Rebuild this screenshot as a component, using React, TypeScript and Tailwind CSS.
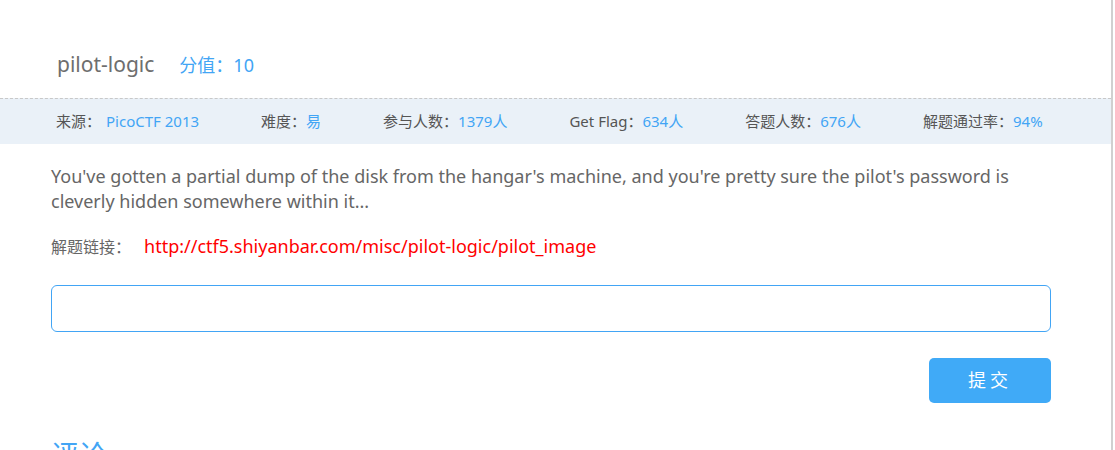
const font = "font-['Noto_Sans','Noto_Sans_CJK_SC',sans-serif]";

const stats: { label: string; value: string }[] = [
  { label: '来源：', value: 'PicoCTF 2013' },
  { label: '难度：', value: '易' },
  { label: '参与人数：', value: '1379人' },
  { label: 'Get Flag：', value: '634人' },
  { label: '答题人数：', value: '676人' },
  { label: '解题通过率：', value: '94%' },
];

export default function App() {
  return (
    <div className={`${font} w-[1115px] h-[450px] overflow-hidden bg-white flex`}>
      <div className="w-[1113px] shrink-0 border-r-2 border-[#d0d0d0]">
        {/* header */}
        <div className="h-[98px] pt-[54px] pl-[57px]">
          <div className="flex items-baseline">
            <span className="text-[21px] text-[#6e6e6e] leading-none">pilot-logic</span>
            <span className="ml-[25px] text-[18px] text-[#42a5f5] leading-none">分值：10</span>
          </div>
        </div>

        {/* stats bar */}
        <div className="h-[46px] border-t border-dashed border-[#c8c8c8] bg-[#eaf1f8] flex items-center gap-[62px] pl-[56px] text-[15px]">
          {stats.map((s, i) => (
            <div key={s.label} className="flex">
              <span className="text-[#555]">{s.label}</span>
              <span className={`text-[#42a5f5] ${i === 0 ? 'ml-[5px]' : ''}`}>{s.value}</span>
            </div>
          ))}
        </div>

        {/* body */}
        <div className="px-[51px] w-[1102px]">
          <p className="mt-[20px] text-[18px] leading-[25px] text-[#666]">
            You've gotten a partial dump of the disk from the hangar's machine, and you're pretty sure the pilot's password is cleverly hidden somewhere within it...
          </p>
          <div className="mt-[20px] leading-[24px] flex items-baseline">
            <span className="text-[16px] text-[#666]">解题链接：</span>
            <span className="ml-[13px] text-[18px] text-[#ff0000]">http://ctf5.shiyanbar.com/misc/pilot-logic/pilot_image</span>
          </div>
          <input className="mt-[26px] block w-full h-[47px] border border-[#42a5f5] rounded-[6px] outline-none px-3" />
          <div className="flex justify-end mt-[26px]">
            <button className="w-[122px] h-[45px] rounded-[5px] bg-[#40aaf7] text-white text-[18px] tracking-[4px]">提交</button>
          </div>
          <div className="mt-[38px] text-[28px] text-[#42a5f5] leading-none">评论</div>
        </div>
      </div>
    </div>
  );
}
